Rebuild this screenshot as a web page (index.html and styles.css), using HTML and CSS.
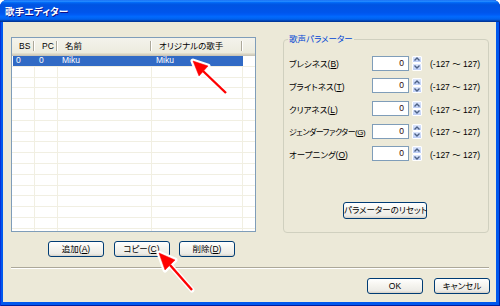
FILE: index.html
```html
<!DOCTYPE html>
<html lang="ja">
<head>
<meta charset="utf-8">
<title>歌手エディター</title>
<link rel="stylesheet" href="styles.css">
</head>
<body>
<div class="window">
  <div class="titlebar"><span class="title">歌手エディター</span></div>
  <div class="client">
    <div class="main">
      <div class="left">
        <div class="listview">
          <div class="lv-header">
            <div class="h c1">BS</div>
            <div class="h c2">PC</div>
            <div class="h c3">名前</div>
            <div class="h c4">オリジナルの歌手</div>
            <div class="h c5"></div>
          </div>
          <div class="lv-body">
            <div class="row sel"><div class="c c1">0</div><div class="c c2">0</div><div class="c c3">Miku</div><div class="c c4">Miku</div><div class="c c5"></div></div>
            <div class="row"><div class="c c1"></div><div class="c c2"></div><div class="c c3"></div><div class="c c4"></div><div class="c c5"></div></div>
            <div class="row"><div class="c c1"></div><div class="c c2"></div><div class="c c3"></div><div class="c c4"></div><div class="c c5"></div></div>
            <div class="row"><div class="c c1"></div><div class="c c2"></div><div class="c c3"></div><div class="c c4"></div><div class="c c5"></div></div>
            <div class="row"><div class="c c1"></div><div class="c c2"></div><div class="c c3"></div><div class="c c4"></div><div class="c c5"></div></div>
            <div class="row"><div class="c c1"></div><div class="c c2"></div><div class="c c3"></div><div class="c c4"></div><div class="c c5"></div></div>
            <div class="row"><div class="c c1"></div><div class="c c2"></div><div class="c c3"></div><div class="c c4"></div><div class="c c5"></div></div>
            <div class="row"><div class="c c1"></div><div class="c c2"></div><div class="c c3"></div><div class="c c4"></div><div class="c c5"></div></div>
            <div class="row"><div class="c c1"></div><div class="c c2"></div><div class="c c3"></div><div class="c c4"></div><div class="c c5"></div></div>
            <div class="row"><div class="c c1"></div><div class="c c2"></div><div class="c c3"></div><div class="c c4"></div><div class="c c5"></div></div>
            <div class="row"><div class="c c1"></div><div class="c c2"></div><div class="c c3"></div><div class="c c4"></div><div class="c c5"></div></div>
            <div class="row"><div class="c c1"></div><div class="c c2"></div><div class="c c3"></div><div class="c c4"></div><div class="c c5"></div></div>
            <div class="row"><div class="c c1"></div><div class="c c2"></div><div class="c c3"></div><div class="c c4"></div><div class="c c5"></div></div>
            <div class="row"><div class="c c1"></div><div class="c c2"></div><div class="c c3"></div><div class="c c4"></div><div class="c c5"></div></div>
            <div class="row"><div class="c c1"></div><div class="c c2"></div><div class="c c3"></div><div class="c c4"></div><div class="c c5"></div></div>
            <div class="row"><div class="c c1"></div><div class="c c2"></div><div class="c c3"></div><div class="c c4"></div><div class="c c5"></div></div>
            <div class="row"><div class="c c1"></div><div class="c c2"></div><div class="c c3"></div><div class="c c4"></div><div class="c c5"></div></div>
          </div>
        </div>
        <div class="btnrow">
          <button class="btn">追加(<u>A</u>)</button>
          <button class="btn">コピー(<u>C</u>)</button>
          <button class="btn">削除(<u>D</u>)</button>
        </div>
      </div>
      <fieldset class="group">
        <legend>歌声パラメーター</legend>
        <div class="params">
          <div class="param">
            <span class="plabel">ブレシネス(<u>B</u>)</span>
            <span class="spin-input">0</span>
            <span class="spin-btns"><span class="sb up"><svg width="6" height="4" viewBox="0 0 6 4"><path d="M0.5 3.5 L3 1 L5.5 3.5" fill="none" stroke="#4d6185" stroke-width="1.4"/></svg></span><span class="sb down"><svg width="6" height="4" viewBox="0 0 6 4"><path d="M0.5 0.5 L3 3 L5.5 0.5" fill="none" stroke="#4d6185" stroke-width="1.4"/></svg></span></span>
            <span class="range">(-127 〜 127)</span>
          </div>
          <div class="param">
            <span class="plabel">ブライトネス(<u>T</u>)</span>
            <span class="spin-input">0</span>
            <span class="spin-btns"><span class="sb up"><svg width="6" height="4" viewBox="0 0 6 4"><path d="M0.5 3.5 L3 1 L5.5 3.5" fill="none" stroke="#4d6185" stroke-width="1.4"/></svg></span><span class="sb down"><svg width="6" height="4" viewBox="0 0 6 4"><path d="M0.5 0.5 L3 3 L5.5 0.5" fill="none" stroke="#4d6185" stroke-width="1.4"/></svg></span></span>
            <span class="range">(-127 〜 127)</span>
          </div>
          <div class="param">
            <span class="plabel">クリアネス(<u>L</u>)</span>
            <span class="spin-input">0</span>
            <span class="spin-btns"><span class="sb up"><svg width="6" height="4" viewBox="0 0 6 4"><path d="M0.5 3.5 L3 1 L5.5 3.5" fill="none" stroke="#4d6185" stroke-width="1.4"/></svg></span><span class="sb down"><svg width="6" height="4" viewBox="0 0 6 4"><path d="M0.5 0.5 L3 3 L5.5 0.5" fill="none" stroke="#4d6185" stroke-width="1.4"/></svg></span></span>
            <span class="range">(-127 〜 127)</span>
          </div>
          <div class="param">
            <span class="plabel tight">ジェンダーファクター(<u>G</u>)</span>
            <span class="spin-input">0</span>
            <span class="spin-btns"><span class="sb up"><svg width="6" height="4" viewBox="0 0 6 4"><path d="M0.5 3.5 L3 1 L5.5 3.5" fill="none" stroke="#4d6185" stroke-width="1.4"/></svg></span><span class="sb down"><svg width="6" height="4" viewBox="0 0 6 4"><path d="M0.5 0.5 L3 3 L5.5 0.5" fill="none" stroke="#4d6185" stroke-width="1.4"/></svg></span></span>
            <span class="range">(-127 〜 127)</span>
          </div>
          <div class="param">
            <span class="plabel">オープニング(<u>O</u>)</span>
            <span class="spin-input">0</span>
            <span class="spin-btns"><span class="sb up"><svg width="6" height="4" viewBox="0 0 6 4"><path d="M0.5 3.5 L3 1 L5.5 3.5" fill="none" stroke="#4d6185" stroke-width="1.4"/></svg></span><span class="sb down"><svg width="6" height="4" viewBox="0 0 6 4"><path d="M0.5 0.5 L3 3 L5.5 0.5" fill="none" stroke="#4d6185" stroke-width="1.4"/></svg></span></span>
            <span class="range">(-127 〜 127)</span>
          </div>
        </div>
        <div class="reset-wrap"><button class="btn btn-reset">パラメーターのリセット</button></div>
      </fieldset>
    </div>
    <div class="sep"></div>
    <div class="footer">
      <button class="btn">OK</button>
      <button class="btn">キャンセル</button>
    </div>
  </div>
  <svg class="arrows" width="500" height="306" viewBox="0 0 500 306">
    <g stroke="#fff" stroke-width="5" stroke-linejoin="round" stroke-linecap="round" fill="#fff">
      <line x1="226" y1="93" x2="203" y2="71"/>
      <polygon points="193,61 208,66 199,76"/>
      <line x1="192" y1="290" x2="170" y2="265"/>
      <polygon points="159,253 175,260 165,270"/>
    </g>
    <g stroke="#ff0000" fill="#ff0000" stroke-linejoin="miter">
      <line x1="226" y1="93" x2="203" y2="71" stroke-width="2.4"/>
      <polygon points="193,61 208,66 199,76" stroke-width="0.5"/>
      <line x1="192" y1="290" x2="170" y2="265" stroke-width="2.4"/>
      <polygon points="159,253 175,260 165,270" stroke-width="0.5"/>
    </g>
  </svg>
</div>
</body>
</html>
```

FILE: styles.css
```css
* { box-sizing: border-box; }
html, body { margin: 0; padding: 0; }
body {
  width: 500px;
  height: 306px;
  overflow: hidden;
  background: #ffffff;
  font-family: "Liberation Sans", "Noto Sans CJK JP", sans-serif;
  font-size: 8.5px;
  color: #000;
  font-feature-settings: "palt" 1;
}
.window {
  position: relative;
  width: 500px;
  height: 306px;
  display: flex;
  flex-direction: column;
  background: #0058ee;
  border-radius: 7px 7px 0 0;
  box-shadow: inset 1px 0 #0831d9, inset -1px 0 #001ea0, inset 0 -1px #001ea0;
}
.titlebar {
  flex: none;
  height: 22px;
  display: flex;
  align-items: center;
  padding-left: 5px;
  border-radius: 7px 7px 0 0;
  background: linear-gradient(180deg, #0058ee 0%, #3593ff 4%, #288eff 6%, #127dff 8%, #036ffc 10%, #0262ee 14%, #0057e5 20%, #0054e3 24%, #0055eb 56%, #005bf5 66%, #026afe 76%, #0062ef 86%, #0052d6 92%, #0040ab 94%, #003092 100%);
}
.title {
  color: #fff;
  font-family: "Noto Sans CJK JP", sans-serif;
  font-weight: bold;
  font-size: 9.5px;
  letter-spacing: 0.2px;
  text-shadow: 1px 1px #0f1089;
}
.client {
  flex: 1;
  margin: 0 4px 4px 3px;
  background: #ece9d8;
  padding: 11px 7px 8px 8px;
  display: flex;
  flex-direction: column;
}
.main {
  display: flex;
  align-items: flex-start;
  gap: 27px;
}
.left {
  width: 245px;
  padding-top: 4px;
  display: flex;
  flex-direction: column;
}
.listview {
  height: 195px;
  border: 1px solid #7f9db9;
  background: #fff;
  overflow: hidden;
}
.lv-header {
  display: flex;
  height: 18px;
  background: linear-gradient(180deg, #f4f3ec, #ebeadb);
  box-shadow: inset 0 -1px #cbc7b8, inset 0 -2px #d6d2c2, inset 0 -3px #e2decd;
}
.h {
  flex: none;
  padding: 2px 0 0 7px;
  line-height: 13px;
  white-space: nowrap;
  background: linear-gradient(#aca899, #aca899) right 1px top 3px / 1px 10px no-repeat,
              linear-gradient(#fff, #fff) right 0 top 3px / 1px 10px no-repeat;
}
.c1 { width: 23px; }
.c2 { width: 23px; }
.c3 { width: 94px; }
.c4 { width: 91px; }
.c5 { flex: 1; }
.h.c5 { background: none; }
.lv-body { display: flex; flex-direction: column; }
.row {
  display: flex;
  height: 10.8px;
  flex: none;
  border-bottom: 1px solid #f1efe2;
}
.c {
  flex: none;
  padding-left: 4px;
  line-height: 9.8px;
  border-right: 1px solid #f1efe2;
  white-space: nowrap;
}
.c.c5 { flex: 1; border-right: none; }
.row.sel .c1, .row.sel .c2, .row.sel .c3, .row.sel .c4 {
  background: #316ac5;
  color: #fff;
  border-right-color: #316ac5;
}
.row.sel .c1 { box-shadow: inset 1px 0 #fff; }
.btnrow {
  display: flex;
  gap: 9.5px;
  margin-top: 9px;
  padding-left: 37px;
}
.btn {
  width: 56px;
  height: 16px;
  padding: 0;
  margin: 0;
  border: 1px solid #003c74;
  border-radius: 3px;
  background: linear-gradient(180deg, #ffffff 0%, #f6f5f0 40%, #ecebe6 85%, #d6d0c5 100%);
  font-family: "Liberation Sans", "Noto Sans CJK JP", sans-serif;
  font-size: 8.5px;
  font-feature-settings: "palt" 1;
  color: #000;
  line-height: 14px;
  text-align: center;
  white-space: nowrap;
}
.group {
  width: 206px;
  height: 200px;
  margin: 0;
  padding: 0 0 0 4px;
  border: 1px solid #d0d0bf;
  border-radius: 4px;
  min-width: 0;
}
.group legend {
  color: #0046d5;
  padding: 0 1px;
  line-height: 12px;
  white-space: nowrap;
}
.params {
  margin: 10.7px 0 0 1px;
  display: flex;
  flex-direction: column;
  gap: 7.7px;
}
.param {
  display: flex;
  align-items: center;
  height: 15px;
}
.plabel {
  width: 83px;
  flex: none;
  white-space: nowrap;
}
.plabel.tight { font-size: 8px; letter-spacing: -0.5px; }
.spin-input {
  width: 37px;
  height: 15px;
  flex: none;
  border: 1px solid #7f9db9;
  background: #fff;
  text-align: right;
  padding-right: 4px;
  line-height: 13px;
  color: #2a0505;
}
.spin-btns {
  width: 10.5px;
  height: 15px;
  margin-left: 2.5px;
  flex: none;
  display: flex;
  flex-direction: column;
}
.sb {
  flex: 1;
  display: flex;
  align-items: center;
  justify-content: center;
  background: linear-gradient(180deg, #dce6fc, #bccdf6);
  border: 1px solid #fff;
  border-radius: 1px;
}
.range {
  margin-left: 8px;
  white-space: nowrap;
}
.reset-wrap {
  display: flex;
  margin-top: 40.5px;
  padding-left: 55px;
}
.btn-reset {
  width: 84px;
  height: 17px;
  line-height: 15px;
}
.sep {
  height: 2px;
  margin-top: 10px;
  border-top: 1px solid #aca899;
  border-bottom: 1px solid #fff;
}
.footer {
  display: flex;
  justify-content: flex-end;
  gap: 11px;
  margin-top: 9px;
  margin-right: -1px;
}
.arrows {
  position: absolute;
  left: 0;
  top: 0;
  pointer-events: none;
}
```
